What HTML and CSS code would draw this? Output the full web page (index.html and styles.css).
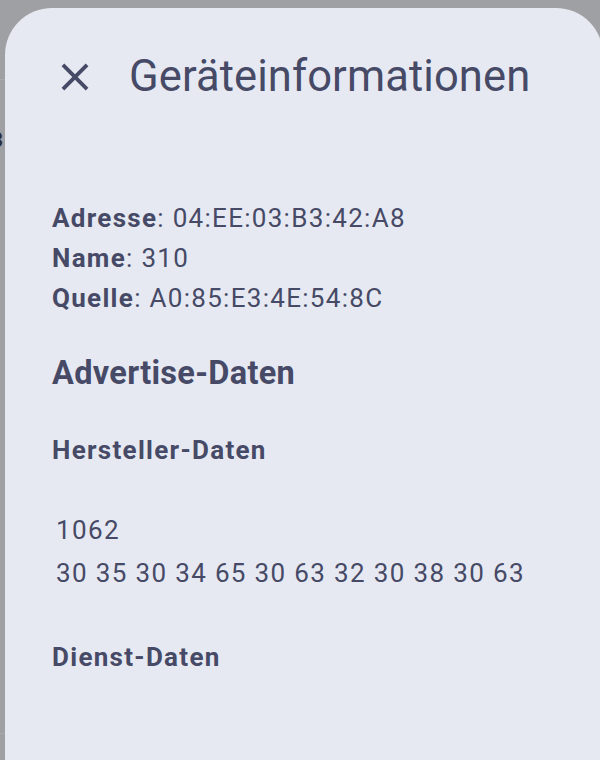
FILE: index.html
```html
<!DOCTYPE html>
<html lang="de">
<head>
    <meta charset="UTF-8">
    <meta name="viewport" content="width=device-width, initial-scale=1.0">
    <title>Geräteinformationen</title>
    <link rel="stylesheet" href="styles.css">
</head>
<body>
    <div class="backdrop">
        <div class="backdrop-row backdrop-top"></div>
        <div class="backdrop-row backdrop-main"><span class="backdrop-text">3</span></div>
    </div>

    <div class="sheet">
        <div class="sheet-header">
            <button class="close-btn" aria-label="Schließen">
                <svg viewBox="0 0 24 24" width="46" height="46">
                    <path d="M19 6.41L17.59 5 12 10.59 6.41 5 5 6.41 10.59 12 5 17.59 6.41 19 12 13.41 17.59 19 19 17.59 13.41 12z" fill="currentColor"/>
                </svg>
            </button>
            <h1 class="sheet-title">Geräteinformationen</h1>
        </div>

        <div class="sheet-body">
            <div class="info">
                <p><strong>Adresse</strong>: 04:EE:03:B3:42:A8</p>
                <p><strong>Name</strong>: 310</p>
                <p><strong>Quelle</strong>: A0:85:E3:4E:54:8C</p>
            </div>

            <h2 class="section-title">Advertise-Daten</h2>

            <h3 class="sub-title">Hersteller-Daten</h3>
            <div class="data-block">
                <p>1062</p>
                <p>30 35 30 34 65 30 63 32 30 38 30 63</p>
            </div>

            <h3 class="sub-title dienst">Dienst-Daten</h3>
        </div>
    </div>
</body>
</html>
```

FILE: styles.css
```css
body { margin: 0; height: 760px; overflow: hidden; background: #9fa0a4; font-family: Roboto, "Noto Sans", sans-serif; color: #464a66; }

.backdrop { height: 760px; }
.backdrop-row { border-bottom: 1px solid #a9aaae; }
.backdrop-top { height: 79px; }
.backdrop-main { height: 603px; }
.backdrop-text { display: block; margin: 50px 0 0 -9px; font-size: 21px; font-weight: 700; line-height: 21px; color: #2c2e3a; }

.sheet { position: absolute; top: 8px; left: 5px; width: 598px; height: 760px; background: #e6e9f2; border-radius: 47px 47px 0 0; }

.sheet-header { display: flex; align-items: flex-start; padding: 0 0 0 47px; }
.close-btn { width: 46px; height: 46px; margin-top: 46px; padding: 0; border: none; background: none; color: #464a66; }
.close-btn svg { display: block; }
.sheet-title { margin: 44px 0 0 31px; font-size: 43.5px; font-weight: 400; line-height: 50px; letter-spacing: 0.1px; }

.sheet-body { padding: 96.4px 0 0 47px; }
.info p { margin: 0; font-size: 26px; line-height: 40px; letter-spacing: 1.3px; }
.info strong { font-weight: 700; }

.section-title { margin: 34.5px 0 0; font-size: 32.5px; font-weight: 700; line-height: 40px; letter-spacing: 0.3px; }
.sub-title { margin: 38.9px 0 0; font-size: 26px; font-weight: 700; line-height: 36px; letter-spacing: 1.3px; }
.dienst { margin-top: 44.2px; }

.data-block { padding: 41.1px 0 0 4px; }
.data-block p { margin: 0; font-size: 26px; line-height: 43px; letter-spacing: 1.35px; }
```
